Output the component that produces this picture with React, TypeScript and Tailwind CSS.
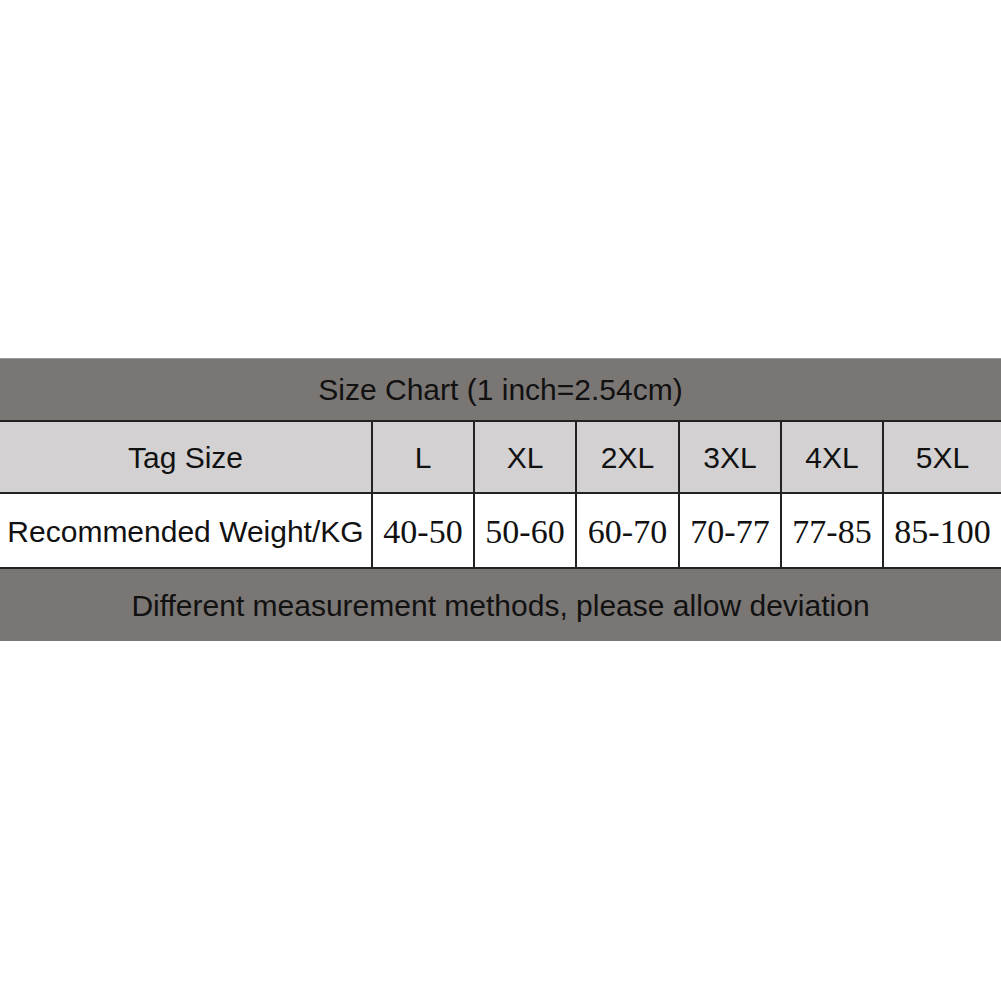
export default function App() {
  const sizes = ["L", "XL", "2XL", "3XL", "4XL", "5XL"];
  const weights = ["40-50", "50-60", "60-70", "70-77", "77-85", "85-100"];
  const widths = ["w-[102px]", "w-[102px]", "w-[103px]", "w-[102px]", "w-[102px]", "flex-1"];
  return (
    <div className="w-[1001px] h-[1001px] bg-white flex flex-col pt-[358px]" style={{ fontFamily: '"Liberation Sans", Arial, sans-serif' }}>
      <div className="h-[62px] bg-[#7a7674] flex items-center justify-center text-[30px] text-[#111] border-t border-[#999]">
        Size Chart (1 inch=2.54cm)
      </div>
      <div className="h-[74px] bg-[#d3d1d1] flex border-t-2 border-b-2 border-[#222] text-[30px] text-[#111]">
        <div className="w-[373px] flex items-center justify-center border-r-2 border-[#222]">Tag Size</div>
        {sizes.map((s, i) => (
          <div key={s} className={`${widths[i]} flex items-center justify-center ${i < 5 ? "border-r-2 border-[#222]" : ""}`}>{s}</div>
        ))}
      </div>
      <div className="h-[75px] bg-white flex border-b-2 border-[#222] text-[#111]">
        <div className="w-[373px] flex items-center justify-center border-r-2 border-[#222] text-[30px] pt-[2px]">Recommended Weight/KG</div>
        {weights.map((w, i) => (
          <div key={w} className={`${widths[i]} flex items-center justify-center text-[34px] pt-[2px] ${i < 5 ? "border-r-2 border-[#222]" : ""}`} style={{ fontFamily: '"Liberation Serif", "Times New Roman", serif' }}>{w}</div>
        ))}
      </div>
      <div className="h-[72px] bg-[#7a7674] flex items-center justify-center text-[30px] text-[#111]">
        Different measurement methods, please allow deviation
      </div>
    </div>
  );
}
